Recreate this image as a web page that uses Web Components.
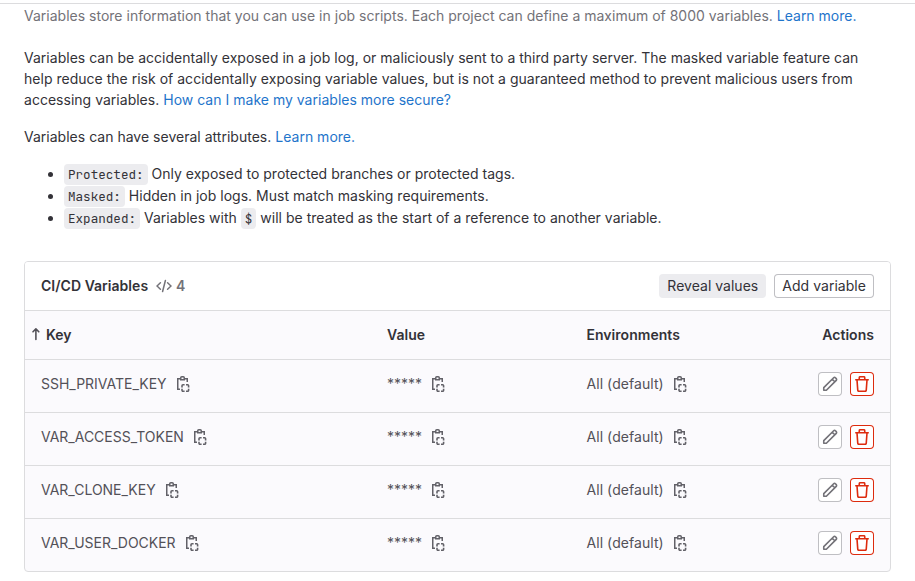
<!DOCTYPE html>
<html lang="en"><head><meta charset="utf-8"><title>CI/CD Variables</title>
<style>
body{margin:0;background:#fff;color:#333238;font:14px/21px Inter,"Liberation Sans",sans-serif;letter-spacing:.014px;overflow:hidden}
</style></head><body>
<variables-settings></variables-settings>
<script>
const define=(name,html,setup)=>{
  const t=document.createElement('template');t.innerHTML=html;
  customElements.define(name,class extends HTMLElement{
    constructor(){super();this.attachShadow({mode:'open'}).append(t.content.cloneNode(true));}
    connectedCallback(){if(setup)setup(this,this.shadowRoot);}
  });
};
const icons={
  clipboard:'<path d="M5.2 2.75H2.75v10.5H5M9.8 2.75h2.45V6" stroke-width="1.5"/><path d="M5.75 1.75a1 1 0 0 1 1-1h1.5a1 1 0 0 1 1 1v2h-3.5z" stroke-width="1.5"/><path d="M7 11.4V9.8a1 1 0 0 1 1-1H9.6M11 8.8h1.6a1 1 0 0 1 1 1v1.6M13.6 12.8v1.5a1 1 0 0 1-1 1H11M9.6 15.3H8a1 1 0 0 1-1-1v-1.5" stroke-width="1.6"/>',
  code:'<path d="M4.4 4.8 1 8l3.4 3.2M11.6 4.8 15 8l-3.4 3.2M9.4 2.5 6.6 13.5" stroke-width="1.5" stroke-linecap="round"/>',
  pencil:'<path d="M1.75 14.25v-2.6l8.9-8.9 1-1a1.25 1.25 0 0 1 1.77 0l.83.83a1.25 1.25 0 0 1 0 1.77l-1 1-8.9 8.9zM10.2 3.2l2.6 2.6" stroke-width="1.6" stroke-linejoin="round"/>',
  remove:'<path d="M5.25 3.4V1.75a1 1 0 0 1 1-1h3.5a1 1 0 0 1 1 1V3.4M1.2 3.75h13.6M3 4l.75 10.1a1.2 1.2 0 0 0 1.2 1.15h6.1a1.2 1.2 0 0 0 1.2-1.15L13 4" stroke-width="1.6"/>'
};
define('ui-icon','<style>:host{display:inline-block;width:16px;height:16px;flex:none}svg{display:block;width:100%;height:100%;fill:none;stroke:currentColor}</style><svg viewBox="0 0 16 16"></svg>',(h,r)=>{r.querySelector('svg').innerHTML=icons[h.getAttribute('name')];});
define('ui-link','<style>:host{color:#1f75cb}</style><slot></slot>');
define('ui-code','<style>:host{display:inline-block;font:12.6px/19px "JetBrains Mono","DejaVu Sans Mono","Liberation Mono",monospace;background:#ececef;border-radius:4px;padding:1px 4px;color:#333238;letter-spacing:0}</style><slot></slot>');
define('ui-button','<style>:host{display:inline-flex;align-items:center;justify-content:center;box-sizing:border-box;height:24px;padding:0 8px 1px;border-radius:4px;letter-spacing:.04px;background:#fff;box-shadow:inset 0 0 0 1px #bfbfc3;color:#333238;white-space:nowrap}:host([kind=soft]){background:#ececef;box-shadow:none;letter-spacing:.02px}:host([kind=icon]){width:24px;padding:0;color:#737278}:host([kind=danger]){width:24px;padding:0;color:#dd2b0e;box-shadow:inset 0 0 0 1px #dd2b0e}</style><slot></slot>');
define('copy-text','<style>:host{display:flex;align-items:center;gap:8px;color:#535158;white-space:nowrap}span{margin-bottom:2px}ui-icon{color:#626168}</style><span><slot></slot></span><ui-icon name="clipboard"></ui-icon>');
const grid='display:grid;grid-template-columns:346px 199.5px 1fr 80px;align-items:center;padding:0 16px;box-sizing:border-box';
define('variable-row',`<style>:host{${grid};height:53px;padding-bottom:4px;border-top:1px solid #dcdcde}.actions{display:flex;gap:8px;justify-content:flex-end}.key{letter-spacing:-.01px}.env{letter-spacing:.06px}</style>
<copy-text class="key"></copy-text><copy-text>*****</copy-text><copy-text class="env">All (default)</copy-text><div class="actions"><ui-button kind="icon"><ui-icon name="pencil"></ui-icon></ui-button><ui-button kind="danger"><ui-icon name="remove"></ui-icon></ui-button></div>`,(h,r)=>{r.querySelector('.key').textContent=h.getAttribute('key');});
define('variables-table',`<style>:host{display:block;box-sizing:border-box;width:867px;border:1px solid #dcdcde;border-radius:4px;overflow:hidden;background:#fbfafd}
header{display:flex;align-items:center;height:48px;padding:0 16px;background:#fff;box-sizing:border-box}
.title,.head{font-weight:600;letter-spacing:.03px}.title,.count span{margin-bottom:2px}.count{display:flex;align-items:center;gap:4px;margin-left:8px;color:#737278;font-weight:600}
.buttons{display:flex;gap:8px;margin-left:auto}.head{${grid};height:49px;padding-bottom:2px;border-top:1px solid #dcdcde}.head>span:last-child{text-align:right}
.first{display:flex;align-items:center;margin-left:-10px;gap:6px}.first svg{width:9px;height:14px;fill:none;stroke:#535158;stroke-width:1.6;stroke-linecap:round;stroke-linejoin:round}</style>
<header><span class="title">CI/CD Variables</span><span class="count"><ui-icon name="code"></ui-icon><span>4</span></span><div class="buttons"><ui-button kind="soft">Reveal values</ui-button><ui-button>Add variable</ui-button></div></header>
<div class="head"><span class="first"><svg viewBox="0 0 9 14"><path d="M4.9 12.5V2.2M2 4.8l2.9-2.9 2.9 2.9"/></svg><span>Key</span></span><span>Value</span><span>Environments</span><span>Actions</span></div>
<slot></slot>`);
define('variables-settings',`<style>:host{display:block;box-sizing:border-box;height:581px;padding:3px 24px 0;overflow:hidden;background:linear-gradient(#dcdcde,#dcdcde) 0 3px/100% 1px no-repeat}
p{margin:0;white-space:nowrap}.intro{color:#737278;padding-top:2px;letter-spacing:.007px}.warn{margin-top:21px;letter-spacing:.016px}.attrs{margin-top:16px}
span{display:block}ul{margin:16px 0 32px;padding:0 0 0 40px}li{height:22px;line-height:22px;white-space:nowrap}</style>
<p class="intro"><span>Variables store information that you can use in job scripts. Each project can define a maximum of 8000 variables. <ui-link>Learn more.</ui-link></span></p>
<p class="warn"><span>Variables can be accidentally exposed in a job log, or maliciously sent to a third party server. The masked variable feature can</span><span>help reduce the risk of accidentally exposing variable values, but is not a guaranteed method to prevent malicious users from</span><span>accessing variables. <ui-link>How can I make my variables more secure?</ui-link></span></p>
<p class="attrs">Variables can have several attributes. <ui-link>Learn more.</ui-link></p>
<ul><li><ui-code>Protected:</ui-code> Only exposed to protected branches or protected tags.</li><li><ui-code>Masked:</ui-code> Hidden in job logs. Must match masking requirements.</li><li><ui-code>Expanded:</ui-code> Variables with <ui-code>$</ui-code> will be treated as the start of a reference to another variable.</li></ul>
<variables-table><variable-row key="SSH_PRIVATE_KEY"></variable-row><variable-row key="VAR_ACCESS_TOKEN"></variable-row><variable-row key="VAR_CLONE_KEY"></variable-row><variable-row key="VAR_USER_DOCKER"></variable-row></variables-table>`);
</script></body></html>
